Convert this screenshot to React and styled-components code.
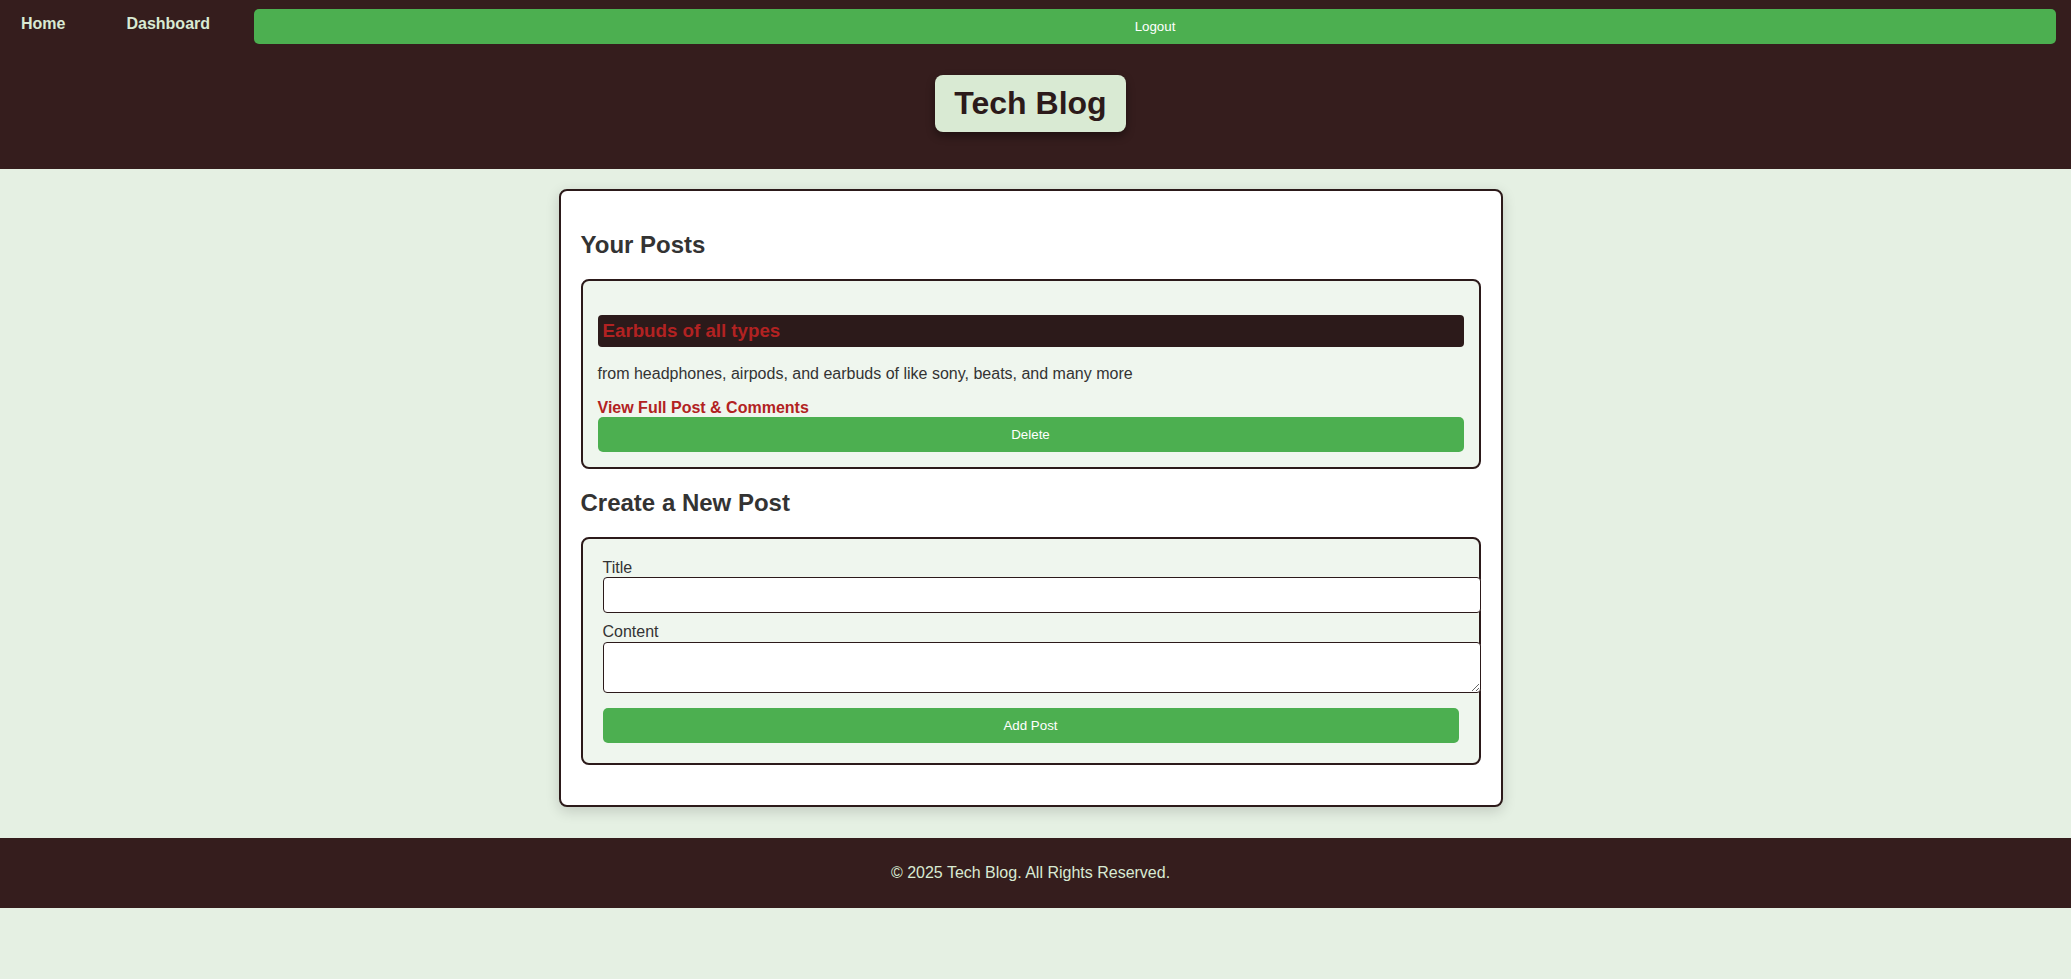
import React from "react";
import styled, { createGlobalStyle } from "styled-components";

const GlobalStyle = createGlobalStyle`
  html, body {
    margin: 0;
    padding: 0;
    background: #e5f0e3;
    font-family: "Liberation Sans", Arial, sans-serif;
  }
  * { font-family: "Liberation Sans", Arial, sans-serif; }
`;

const Header = styled.header`
  background: #351d1d;
  padding-bottom: 37px;
`;

const Nav = styled.nav`
  display: flex;
  align-items: flex-start;
  gap: 21px;
  padding: 9px 15px 0 1px;
`;

const NavLink = styled.a`
  display: block;
  padding: 6px 20px 0;
  color: #d9ead3;
  font-size: 16px;
  font-weight: bold;
  text-decoration: none;
  line-height: 18px;
`;

const GreenButton = styled.button`
  display: block;
  background: #4caf50;
  color: #ffffff;
  border: none;
  border-radius: 5px;
  padding: 10px;
  font-size: 13.33px;
  line-height: 15px;
  cursor: pointer;
  width: ${(p) => (p.$full ? "100%" : "auto")};
  flex: ${(p) => (p.$grow ? "1" : "none")};
  margin-left: ${(p) => p.$ml || "0"};
`;

const TitleRow = styled.div`
  display: flex;
  justify-content: center;
  margin-top: 31px;
  padding-right: 10px;
`;

const TitleBox = styled.h1`
  margin: 0;
  background: #d9ead3;
  color: #2c1a1a;
  font-size: 32px;
  line-height: 37px;
  font-weight: bold;
  padding: 10px 19px;
  border-radius: 8px;
  box-shadow: 0 4px 8px rgba(0, 0, 0, 0.4);
`;

const Main = styled.main`
  padding: 20px 10px 31px 0;
`;

const Card = styled.div`
  max-width: 900px;
  margin: 0 auto;
  background: #ffffff;
  border: 2px solid #2c1a1a;
  border-radius: 8px;
  padding: 20px;
  box-shadow: 0 4px 14px rgba(0, 0, 0, 0.16);
`;

const SectionTitle = styled.h2`
  margin: 19.92px 0;
  font-size: 24px;
  font-weight: bold;
  color: #333333;
`;

const Panel = styled.div`
  background: #eff6ee;
  border: 2px solid #2c1a1a;
  border-radius: 8px;
  padding: ${(p) => p.$pad || "15px"};
  margin-bottom: ${(p) => p.$mb || "0"};
`;

const PostTitle = styled.h3`
  margin: 18.72px 0;
  background: #2c1a1a;
  color: #b22222;
  font-size: 18.72px;
  font-weight: bold;
  padding: 5px;
  border-radius: 4px;
`;

const PostBody = styled.p`
  margin: 16px 0;
  font-size: 16px;
  color: #333333;
`;

const PostLink = styled.a`
  color: #b22222;
  font-weight: bold;
  font-size: 16px;
  text-decoration: none;
`;

const Label = styled.label`
  display: block;
  font-size: 16px;
  color: #333333;
  line-height: 18.4px;
`;

const TextInput = styled.input`
  display: block;
  width: 100%;
  box-sizing: content-box;
  height: 14px;
  padding: 10px;
  margin: 0 0 10px;
  border: 1px solid #2c1a1a;
  border-radius: 4px;
  background: #ffffff;
  font-size: 13.33px;
`;

const TextArea = styled.textarea`
  display: block;
  width: 100%;
  box-sizing: content-box;
  height: 29px;
  padding: 10px;
  margin: 0 0 15px;
  border: 1px solid #2c1a1a;
  border-radius: 4px;
  background: #ffffff;
  font-size: 13.33px;
`;

const Footer = styled.footer`
  background: #351d1d;
  padding: 10px 10px 10px 0;
  text-align: center;
`;

const FooterText = styled.p`
  margin: 16px 0;
  color: #d9ead3;
  font-size: 16px;
`;

export default function App() {
  return (
    <>
      <GlobalStyle />
      <Header>
        <Nav>
          <NavLink href="#">Home</NavLink>
          <NavLink href="#">Dashboard</NavLink>
          <GreenButton $grow $ml="3px">Logout</GreenButton>
        </Nav>
        <TitleRow>
          <TitleBox>Tech Blog</TitleBox>
        </TitleRow>
      </Header>
      <Main>
        <Card>
          <SectionTitle>Your Posts</SectionTitle>
          <Panel>
            <PostTitle>Earbuds of all types</PostTitle>
            <PostBody>
              from headphones, airpods, and earbuds of like sony, beats, and many more
            </PostBody>
            <PostLink href="#">View Full Post &amp; Comments</PostLink>
            <GreenButton $full>Delete</GreenButton>
          </Panel>
          <SectionTitle>Create a New Post</SectionTitle>
          <Panel $pad="20px" $mb="20px">
            <form onSubmit={(e) => e.preventDefault()}>
              <Label htmlFor="title">Title</Label>
              <TextInput id="title" type="text" />
              <Label htmlFor="content">Content</Label>
              <TextArea id="content" />
              <GreenButton $full type="submit">Add Post</GreenButton>
            </form>
          </Panel>
        </Card>
      </Main>
      <Footer>
        <FooterText>© 2025 Tech Blog. All Rights Reserved.</FooterText>
      </Footer>
    </>
  );
}
